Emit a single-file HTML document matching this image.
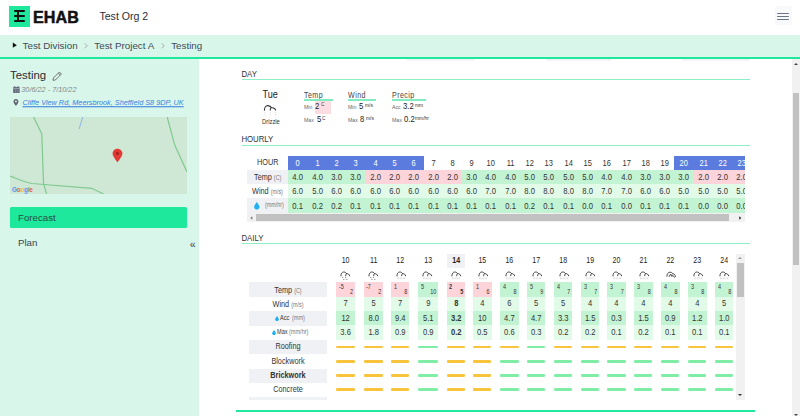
<!DOCTYPE html><html><head><meta charset="utf-8"><style>
*{box-sizing:border-box;margin:0;padding:0}
html,body{width:800px;height:416px;overflow:hidden;background:#fff}
body{position:relative;font-family:"Liberation Sans",sans-serif;color:#333}
.abs{position:absolute}
.t{position:absolute;white-space:nowrap;line-height:1}
</style></head><body>
<div class="abs" style="left:9px;top:6px;width:21px;height:20.5px;background:#1ee89c;"></div>
<div class="abs" style="left:13.9px;top:10.2px;width:11px;height:1.9px;background:#111;border-radius:0.9px"></div>
<div class="abs" style="left:13.9px;top:15.3px;width:11px;height:1.9px;background:#111;border-radius:0.9px"></div>
<div class="abs" style="left:13.9px;top:20.4px;width:11px;height:1.9px;background:#111;border-radius:0.9px"></div>
<div class="abs" style="left:16.9px;top:10.5px;width:2.1px;height:11.5px;background:#111;border-radius:0.9px"></div>
<div class="t" style="left:32.9px;top:8.72px;font-size:16.1px;font-weight:bold;color:#111;letter-spacing:0.15px;-webkit-text-stroke:0.5px #111">EHAB</div>
<div class="t" style="left:99.4px;top:10.63px;font-size:10.6px;color:#2c2f3a">Test Org 2</div>
<div class="abs" style="left:774.5px;top:5.5px;width:17.2px;height:19px;background:#f8f9fb;border-radius:2px"></div>
<div class="abs" style="left:777.3px;top:13.0px;width:11.5px;height:1.4px;background:#6e7381;border-radius:0.7px"></div>
<div class="abs" style="left:777.3px;top:16.0px;width:11.5px;height:1.4px;background:#6e7381;border-radius:0.7px"></div>
<div class="abs" style="left:777.3px;top:19.0px;width:11.5px;height:1.4px;background:#6e7381;border-radius:0.7px"></div>
<div class="abs" style="left:0px;top:35px;width:800px;height:22px;background:#d8f7ea;"></div>
<div class="abs" style="left:0px;top:57px;width:800px;height:2px;background:#1ee89c;"></div>
<svg class="abs" style="left:12px;top:42px" width="6" height="7" viewBox="0 0 6 7"><path d="M0.8 0.6 L4.9 3.2 L0.8 5.8 Z" fill="#111"/></svg>
<div class="t" style="left:22.6px;top:40.70px;font-size:9.8px;color:#434958">Test Division</div>
<div class="t" style="left:94.3px;top:40.70px;font-size:9.8px;color:#434958">Test Project A</div>
<div class="t" style="left:171.2px;top:40.70px;font-size:9.8px;color:#434958">Testing</div>
<svg class="abs" style="left:83.9px;top:43.3px" width="4" height="5.6" viewBox="0 0 4 5.6"><path d="M0.5 0.4 L3.3 2.8 L0.5 5.2" fill="none" stroke="#9aa0aa" stroke-width="0.8"/></svg>
<svg class="abs" style="left:160.9px;top:43.3px" width="4" height="5.6" viewBox="0 0 4 5.6"><path d="M0.5 0.4 L3.3 2.8 L0.5 5.2" fill="none" stroke="#9aa0aa" stroke-width="0.8"/></svg>
<div class="abs" style="left:0px;top:59px;width:199px;height:357px;background:#d8f7ea;"></div>
<div class="t" style="left:10px;top:69.85px;font-size:11.4px;color:#2a2d36">Testing</div>
<svg class="abs" style="left:52px;top:70.5px" width="11" height="10" viewBox="0 0 11 10"><path d="M1 9.3 L1.4 7 L7.4 1 L9.4 3 L3.4 9 Z M6.3 2.1 L8.3 4.1" fill="none" stroke="#666" stroke-width="0.9" stroke-linejoin="round"/></svg>
<svg class="abs" style="left:13px;top:85.6px" width="7" height="7.2" viewBox="0 0 7 7.2"><rect x="0.1" y="1" width="6.6" height="6.2" rx="0.5" fill="#6b7080"/><rect x="1.2" y="0" width="1" height="1.6" fill="#6b7080"/><rect x="4.6" y="0" width="1" height="1.6" fill="#6b7080"/><rect x="0.1" y="2.3" width="6.6" height="0.45" fill="#c8ccd4"/><rect x="2.3" y="2.7" width="0.4" height="4.3" fill="#9da2ad"/><rect x="4.2" y="2.7" width="0.4" height="4.3" fill="#9da2ad"/></svg>
<div class="t" style="left:21.3px;top:86.12px;font-size:7.3px;transform:scale(1.0,1.06);transform-origin:0 3.57px;font-style:italic;color:#858585">30/6/22 - 7/10/22</div>
<svg class="abs" style="left:13.3px;top:99.2px" width="5.9" height="6.9" viewBox="0 0 5 7"><path d="M2.5 0 C1.05 0 0 1.1 0 2.45 C0 4.1 2.5 7 2.5 7 C2.5 7 5 4.1 5 2.45 C5 1.1 3.95 0 2.5 0 Z" fill="#5f6472"/><circle cx="2.5" cy="2.45" r="0.95" fill="#f4f6f8"/></svg>
<div class="t" style="left:22.5px;top:99.32px;font-size:7.3px;transform:scale(1.0,1.06);transform-origin:0 3.57px;font-style:italic;color:#3b7fe0;text-decoration:underline">Cliffe View Rd, Meersbrook, Sheffield S8 9DP, UK</div>
<svg class="abs" style="left:10px;top:117px" width="177" height="77" viewBox="0 0 177 77"><rect width="177" height="77" fill="#cfe8d6"/><polyline points="23.5,0 31.8,16.9 33.5,66.3 36.6,77" fill="none" stroke="#80c98f" stroke-width="1.2"/><path d="M0 59.1 C8 62 14 65 22 66.5 L81.7 71.3 L93.6 77" fill="none" stroke="#80c98f" stroke-width="1.2"/><polyline points="157.2,0 164.8,28.3 177,54.9" fill="none" stroke="#80c98f" stroke-width="1.2"/><polyline points="72.7,0 69.1,12.1" fill="none" stroke="#8fb5ea" stroke-width="1"/><path d="M107.4 31.8 C104.6 31.8 102.6 34 102.6 36.6 C102.6 39.6 107.4 45.4 107.4 45.4 C107.4 45.4 112.4 39.6 112.4 36.6 C112.4 34 110.2 31.8 107.4 31.8 Z" fill="#e53935"/><circle cx="107.4" cy="36.4" r="1.6" fill="#a52420"/></svg>
<div class="t" style="left:12px;top:186.91px;font-size:6.6px;transform:scale(0.96,1.12);transform-origin:0 3.22px;font-weight:bold;letter-spacing:-0.2px;opacity:0.85"><span style="color:#4285f4">G</span><span style="color:#ea4335">o</span><span style="color:#fbbc05">o</span><span style="color:#4285f4">g</span><span style="color:#34a853">l</span><span style="color:#ea4335">e</span></div>
<div class="abs" style="left:10px;top:207px;width:177px;height:20.5px;background:#1ee89c;border-radius:1.5px"></div>
<div class="t" style="left:18px;top:213.09px;font-size:9.7px;color:#2a4a44">Forecast</div>
<div class="t" style="left:18px;top:238.39px;font-size:9.7px;color:#3a4050">Plan</div>
<div class="t" style="left:189.8px;top:239.11px;font-size:10.5px;color:#3a4050">&#171;</div>
<div class="abs" style="left:407px;top:59px;width:67px;height:2px;background:#f3f4f7;"></div>
<div class="abs" style="left:545.6px;top:59px;width:65.39999999999998px;height:2px;background:#f3f4f7;"></div>
<div class="abs" style="left:682px;top:59px;width:68px;height:2px;background:#f3f4f7;"></div>
<div class="abs" style="left:792px;top:59px;width:8px;height:357px;background:#f1f1f1;"></div>
<div class="abs" style="left:793px;top:93px;width:6px;height:172px;background:#c1c1c1;"></div>
<div class="abs" style="left:794.4px;top:62.5px;width:0;height:0;border-left:2px solid transparent;border-right:2px solid transparent;border-bottom:2.6px solid #444"></div>
<div class="abs" style="left:794.4px;top:413.8px;width:0;height:0;border-left:2.1px solid transparent;border-right:2.1px solid transparent;border-top:2.8px solid #444"></div>
<div class="t" style="left:241.4px;top:70.60px;font-size:7.8px;transform:scale(1.0,1.13);transform-origin:0 3.81px;color:#333">DAY</div>
<div class="abs" style="left:242px;top:79px;width:507.5px;height:1px;background:#8cefc6;"></div>
<div class="t" style="left:262.5px;top:91.30px;font-size:9.1px;transform:scale(1.0,1.1);transform-origin:0 4.45px;color:#222">Tue</div>
<svg class="abs" style="left:263px;top:104px" width="14" height="13" viewBox="0 0 14 13"><path d="M1.4 6.3 C1.4 3.5 3 1.6 4.7 1.6 C6 1.6 7.5 2.3 8.2 3.4 C7.4 4 7.2 5.2 7.2 6.1 M8.2 3.4 C10 3.4 12.4 4.6 12.6 6.1" fill="none" stroke="#333" stroke-width="1.05" stroke-linecap="round"/><path d="M1.9 8v4.2 M7.6 8v4.2 M12.4 8v4.2" stroke="#d0d0d0" stroke-width="0.7" stroke-dasharray="1.1 0.9"/></svg>
<div class="t" style="left:262.3px;top:118.94px;font-size:6.1px;transform:scale(0.96,1.12);transform-origin:0 2.98px;color:#333">Drizzle</div>
<div class="t" style="left:304.3px;top:91.74px;font-size:7.4px;transform:scale(0.96,1.12);transform-origin:0 3.61px;color:#444;letter-spacing:0.45px">Temp</div>
<div class="abs" style="left:304.3px;top:99.3px;width:28.4px;height:1.3px;background:#80ecc2;"></div>
<div class="t" style="left:348.1px;top:91.74px;font-size:7.4px;transform:scale(0.96,1.12);transform-origin:0 3.61px;color:#444;letter-spacing:0.45px">Wind</div>
<div class="abs" style="left:348.1px;top:99.3px;width:28.2px;height:1.3px;background:#80ecc2;"></div>
<div class="t" style="left:392px;top:91.74px;font-size:7.4px;transform:scale(0.96,1.12);transform-origin:0 3.61px;color:#444;letter-spacing:0.45px">Precip</div>
<div class="abs" style="left:392px;top:99.3px;width:34.2px;height:1.3px;background:#80ecc2;"></div>
<div class="abs" style="left:315px;top:101px;width:16px;height:12.8px;background:#fdd4d9;opacity:0.8"></div>
<div class="t" style="left:304.2px;top:104.73px;font-size:5.4px;transform:scale(0.96,1.12);transform-origin:0 2.64px;color:#666">Min</div>
<div class="t" style="left:348.0px;top:104.73px;font-size:5.4px;transform:scale(0.96,1.12);transform-origin:0 2.64px;color:#666">Min</div>
<div class="t" style="left:392px;top:104.73px;font-size:5.4px;transform:scale(0.96,1.12);transform-origin:0 2.64px;color:#666">Acc</div>
<div class="t" style="left:304.2px;top:117.83px;font-size:5.4px;transform:scale(0.96,1.12);transform-origin:0 2.64px;color:#666">Max</div>
<div class="t" style="left:348.0px;top:117.83px;font-size:5.4px;transform:scale(0.96,1.12);transform-origin:0 2.64px;color:#666">Max</div>
<div class="t" style="left:392px;top:117.83px;font-size:5.4px;transform:scale(0.96,1.12);transform-origin:0 2.64px;color:#666">Max</div>
<div class="t" style="left:314.7px;top:103.23px;font-size:8px;transform:scale(0.96,1.12);transform-origin:0 3.91px;color:#222">2</div>
<div class="t" style="left:321px;top:103.15px;font-size:4.9px;transform:scale(0.96,1.12);transform-origin:0 2.39px;color:#333">C</div>
<div class="t" style="left:316.5px;top:116.43px;font-size:8px;transform:scale(0.96,1.12);transform-origin:0 3.91px;color:#222">5</div>
<div class="t" style="left:322px;top:116.55px;font-size:4.9px;transform:scale(0.96,1.12);transform-origin:0 2.39px;color:#333">C</div>
<div class="t" style="left:358.7px;top:103.23px;font-size:8px;transform:scale(0.96,1.12);transform-origin:0 3.91px;color:#222">5</div>
<div class="t" style="left:365.3px;top:102.98px;font-size:5.1px;transform:scale(0.96,1.12);transform-origin:0 2.49px;color:#333">m/s</div>
<div class="t" style="left:360.4px;top:116.43px;font-size:8px;transform:scale(0.96,1.12);transform-origin:0 3.91px;color:#222">8</div>
<div class="t" style="left:365.6px;top:116.38px;font-size:5.1px;transform:scale(0.96,1.12);transform-origin:0 2.49px;color:#333">m/s</div>
<div class="t" style="left:403.2px;top:103.23px;font-size:8px;transform:scale(0.96,1.12);transform-origin:0 3.91px;color:#222">3.2</div>
<div class="t" style="left:415px;top:102.98px;font-size:5.1px;transform:scale(0.96,1.12);transform-origin:0 2.49px;color:#333">mm</div>
<div class="t" style="left:404.3px;top:116.43px;font-size:8px;transform:scale(0.96,1.12);transform-origin:0 3.91px;color:#222">0.2</div>
<div class="t" style="left:415.3px;top:116.38px;font-size:5.1px;transform:scale(0.96,1.12);transform-origin:0 2.49px;color:#333">mm/hr</div>
<div class="t" style="left:241.4px;top:135.90px;font-size:7.8px;transform:scale(1.0,1.13);transform-origin:0 3.81px;color:#333">HOURLY</div>
<div class="abs" style="left:242px;top:145px;width:507.5px;height:1px;background:#8cefc6;"></div>
<div class="abs" style="left:247px;top:156px;width:498px;height:66px;overflow:hidden">
<div class="abs" style="left:0px;top:14px;width:41.4px;height:14.3px;background:#f0f1f4;"></div>
<div class="abs" style="left:0px;top:42.3px;width:41.4px;height:14.3px;background:#f0f1f4;"></div>
<div class="t" style="left:10px;top:2.77px;font-size:7.6px;transform:scale(0.96,1.12);transform-origin:0 3.71px;color:#333">HOUR</div>
<div class="t" style="left:6.9px;top:18.17px;font-size:7.6px;transform:scale(0.96,1.12);transform-origin:0 3.71px;color:#333">Temp <span style="font-size:5.6px;color:#777">(C)</span></div>
<div class="t" style="left:4.8px;top:31.97px;font-size:7.6px;transform:scale(0.96,1.12);transform-origin:0 3.71px;color:#333">Wind <span style="font-size:5.6px;color:#777">(m/s)</span></div>
<svg class="abs" style="left:7px;top:46.2px" width="5.6" height="7.5" viewBox="0 0 5 7"><path d="M2.5 0 C2.5 0 0 3.2 0 4.6 C0 5.95 1.1 7 2.5 7 C3.9 7 5 5.95 5 4.6 C5 3.2 2.5 0 2.5 0Z" fill="#1fb0f2"/></svg>
<div class="t" style="left:17.5px;top:47.46px;font-size:5.6px;transform:scale(0.96,1.12);transform-origin:0 2.74px;color:#777">(mm/hr)</div>
<div class="abs" style="left:41.39999999999998px;top:0px;width:19.400000000000002px;height:14px;background:#5b7bde;"></div>
<div class="t" style="left:41.39999999999998px;top:4.00px;font-size:7.8px;width:19.3px;text-align:center;transform:scale(0.96,1.12);transform-origin:50% 3.81px;color:#fff">0</div>
<div class="abs" style="left:41.39999999999998px;top:14px;width:19.400000000000002px;height:14.3px;background:#c2f3d2;"></div>
<div class="abs" style="left:41.39999999999998px;top:28.3px;width:19.400000000000002px;height:14px;background:#e2fbe9;"></div>
<div class="abs" style="left:41.39999999999998px;top:42.3px;width:19.400000000000002px;height:14.3px;background:#c2f3d2;"></div>
<div class="t" style="left:41.39999999999998px;top:17.93px;font-size:8px;width:19.3px;text-align:center;transform:scale(0.96,1.12);transform-origin:50% 3.91px;color:#333">4.0</div>
<div class="t" style="left:41.39999999999998px;top:32.03px;font-size:8px;width:19.3px;text-align:center;transform:scale(0.96,1.12);transform-origin:50% 3.91px;color:#333">6.0</div>
<div class="t" style="left:41.39999999999998px;top:46.63px;font-size:8px;width:19.3px;text-align:center;transform:scale(0.96,1.12);transform-origin:50% 3.91px;color:#333">0.1</div>
<div class="abs" style="left:60.699999999999974px;top:0px;width:19.400000000000002px;height:14px;background:#5b7bde;"></div>
<div class="t" style="left:60.699999999999974px;top:4.00px;font-size:7.8px;width:19.3px;text-align:center;transform:scale(0.96,1.12);transform-origin:50% 3.81px;color:#fff">1</div>
<div class="abs" style="left:60.699999999999974px;top:14px;width:19.400000000000002px;height:14.3px;background:#c2f3d2;"></div>
<div class="abs" style="left:60.699999999999974px;top:28.3px;width:19.400000000000002px;height:14px;background:#e2fbe9;"></div>
<div class="abs" style="left:60.699999999999974px;top:42.3px;width:19.400000000000002px;height:14.3px;background:#c2f3d2;"></div>
<div class="t" style="left:60.699999999999974px;top:17.93px;font-size:8px;width:19.3px;text-align:center;transform:scale(0.96,1.12);transform-origin:50% 3.91px;color:#333">4.0</div>
<div class="t" style="left:60.699999999999974px;top:32.03px;font-size:8px;width:19.3px;text-align:center;transform:scale(0.96,1.12);transform-origin:50% 3.91px;color:#333">5.0</div>
<div class="t" style="left:60.699999999999974px;top:46.63px;font-size:8px;width:19.3px;text-align:center;transform:scale(0.96,1.12);transform-origin:50% 3.91px;color:#333">0.2</div>
<div class="abs" style="left:79.99999999999997px;top:0px;width:19.400000000000002px;height:14px;background:#5b7bde;"></div>
<div class="t" style="left:79.99999999999997px;top:4.00px;font-size:7.8px;width:19.3px;text-align:center;transform:scale(0.96,1.12);transform-origin:50% 3.81px;color:#fff">2</div>
<div class="abs" style="left:79.99999999999997px;top:14px;width:19.400000000000002px;height:14.3px;background:#c2f3d2;"></div>
<div class="abs" style="left:79.99999999999997px;top:28.3px;width:19.400000000000002px;height:14px;background:#e2fbe9;"></div>
<div class="abs" style="left:79.99999999999997px;top:42.3px;width:19.400000000000002px;height:14.3px;background:#c2f3d2;"></div>
<div class="t" style="left:79.99999999999997px;top:17.93px;font-size:8px;width:19.3px;text-align:center;transform:scale(0.96,1.12);transform-origin:50% 3.91px;color:#333">3.0</div>
<div class="t" style="left:79.99999999999997px;top:32.03px;font-size:8px;width:19.3px;text-align:center;transform:scale(0.96,1.12);transform-origin:50% 3.91px;color:#333">6.0</div>
<div class="t" style="left:79.99999999999997px;top:46.63px;font-size:8px;width:19.3px;text-align:center;transform:scale(0.96,1.12);transform-origin:50% 3.91px;color:#333">0.2</div>
<div class="abs" style="left:99.29999999999998px;top:0px;width:19.400000000000002px;height:14px;background:#5b7bde;"></div>
<div class="t" style="left:99.29999999999998px;top:4.00px;font-size:7.8px;width:19.3px;text-align:center;transform:scale(0.96,1.12);transform-origin:50% 3.81px;color:#fff">3</div>
<div class="abs" style="left:99.29999999999998px;top:14px;width:19.400000000000002px;height:14.3px;background:#c2f3d2;"></div>
<div class="abs" style="left:99.29999999999998px;top:28.3px;width:19.400000000000002px;height:14px;background:#e2fbe9;"></div>
<div class="abs" style="left:99.29999999999998px;top:42.3px;width:19.400000000000002px;height:14.3px;background:#c2f3d2;"></div>
<div class="t" style="left:99.29999999999998px;top:17.93px;font-size:8px;width:19.3px;text-align:center;transform:scale(0.96,1.12);transform-origin:50% 3.91px;color:#333">3.0</div>
<div class="t" style="left:99.29999999999998px;top:32.03px;font-size:8px;width:19.3px;text-align:center;transform:scale(0.96,1.12);transform-origin:50% 3.91px;color:#333">6.0</div>
<div class="t" style="left:99.29999999999998px;top:46.63px;font-size:8px;width:19.3px;text-align:center;transform:scale(0.96,1.12);transform-origin:50% 3.91px;color:#333">0.1</div>
<div class="abs" style="left:118.59999999999998px;top:0px;width:19.400000000000002px;height:14px;background:#5b7bde;"></div>
<div class="t" style="left:118.59999999999998px;top:4.00px;font-size:7.8px;width:19.3px;text-align:center;transform:scale(0.96,1.12);transform-origin:50% 3.81px;color:#fff">4</div>
<div class="abs" style="left:118.59999999999998px;top:14px;width:19.400000000000002px;height:14.3px;background:#fdd4d9;"></div>
<div class="abs" style="left:118.59999999999998px;top:28.3px;width:19.400000000000002px;height:14px;background:#e2fbe9;"></div>
<div class="abs" style="left:118.59999999999998px;top:42.3px;width:19.400000000000002px;height:14.3px;background:#c2f3d2;"></div>
<div class="t" style="left:118.59999999999998px;top:17.93px;font-size:8px;width:19.3px;text-align:center;transform:scale(0.96,1.12);transform-origin:50% 3.91px;color:#333">2.0</div>
<div class="t" style="left:118.59999999999998px;top:32.03px;font-size:8px;width:19.3px;text-align:center;transform:scale(0.96,1.12);transform-origin:50% 3.91px;color:#333">6.0</div>
<div class="t" style="left:118.59999999999998px;top:46.63px;font-size:8px;width:19.3px;text-align:center;transform:scale(0.96,1.12);transform-origin:50% 3.91px;color:#333">0.1</div>
<div class="abs" style="left:137.89999999999998px;top:0px;width:19.400000000000002px;height:14px;background:#5b7bde;"></div>
<div class="t" style="left:137.89999999999998px;top:4.00px;font-size:7.8px;width:19.3px;text-align:center;transform:scale(0.96,1.12);transform-origin:50% 3.81px;color:#fff">5</div>
<div class="abs" style="left:137.89999999999998px;top:14px;width:19.400000000000002px;height:14.3px;background:#fdd4d9;"></div>
<div class="abs" style="left:137.89999999999998px;top:28.3px;width:19.400000000000002px;height:14px;background:#e2fbe9;"></div>
<div class="abs" style="left:137.89999999999998px;top:42.3px;width:19.400000000000002px;height:14.3px;background:#c2f3d2;"></div>
<div class="t" style="left:137.89999999999998px;top:17.93px;font-size:8px;width:19.3px;text-align:center;transform:scale(0.96,1.12);transform-origin:50% 3.91px;color:#333">2.0</div>
<div class="t" style="left:137.89999999999998px;top:32.03px;font-size:8px;width:19.3px;text-align:center;transform:scale(0.96,1.12);transform-origin:50% 3.91px;color:#333">6.0</div>
<div class="t" style="left:137.89999999999998px;top:46.63px;font-size:8px;width:19.3px;text-align:center;transform:scale(0.96,1.12);transform-origin:50% 3.91px;color:#333">0.1</div>
<div class="abs" style="left:157.2px;top:0px;width:19.400000000000002px;height:14px;background:#5b7bde;"></div>
<div class="t" style="left:157.2px;top:4.00px;font-size:7.8px;width:19.3px;text-align:center;transform:scale(0.96,1.12);transform-origin:50% 3.81px;color:#fff">6</div>
<div class="abs" style="left:157.2px;top:14px;width:19.400000000000002px;height:14.3px;background:#fdd4d9;"></div>
<div class="abs" style="left:157.2px;top:28.3px;width:19.400000000000002px;height:14px;background:#e2fbe9;"></div>
<div class="abs" style="left:157.2px;top:42.3px;width:19.400000000000002px;height:14.3px;background:#c2f3d2;"></div>
<div class="t" style="left:157.2px;top:17.93px;font-size:8px;width:19.3px;text-align:center;transform:scale(0.96,1.12);transform-origin:50% 3.91px;color:#333">2.0</div>
<div class="t" style="left:157.2px;top:32.03px;font-size:8px;width:19.3px;text-align:center;transform:scale(0.96,1.12);transform-origin:50% 3.91px;color:#333">6.0</div>
<div class="t" style="left:157.2px;top:46.63px;font-size:8px;width:19.3px;text-align:center;transform:scale(0.96,1.12);transform-origin:50% 3.91px;color:#333">0.1</div>
<div class="t" style="left:176.49999999999997px;top:4.00px;font-size:7.8px;width:19.3px;text-align:center;transform:scale(0.96,1.12);transform-origin:50% 3.81px;color:#333">7</div>
<div class="abs" style="left:176.49999999999997px;top:14px;width:19.400000000000002px;height:14.3px;background:#fdd4d9;"></div>
<div class="abs" style="left:176.49999999999997px;top:28.3px;width:19.400000000000002px;height:14px;background:#e2fbe9;"></div>
<div class="abs" style="left:176.49999999999997px;top:42.3px;width:19.400000000000002px;height:14.3px;background:#c2f3d2;"></div>
<div class="t" style="left:176.49999999999997px;top:17.93px;font-size:8px;width:19.3px;text-align:center;transform:scale(0.96,1.12);transform-origin:50% 3.91px;color:#333">2.0</div>
<div class="t" style="left:176.49999999999997px;top:32.03px;font-size:8px;width:19.3px;text-align:center;transform:scale(0.96,1.12);transform-origin:50% 3.91px;color:#333">6.0</div>
<div class="t" style="left:176.49999999999997px;top:46.63px;font-size:8px;width:19.3px;text-align:center;transform:scale(0.96,1.12);transform-origin:50% 3.91px;color:#333">0.1</div>
<div class="t" style="left:195.79999999999998px;top:4.00px;font-size:7.8px;width:19.3px;text-align:center;transform:scale(0.96,1.12);transform-origin:50% 3.81px;color:#333">8</div>
<div class="abs" style="left:195.79999999999998px;top:14px;width:19.400000000000002px;height:14.3px;background:#fdd4d9;"></div>
<div class="abs" style="left:195.79999999999998px;top:28.3px;width:19.400000000000002px;height:14px;background:#e2fbe9;"></div>
<div class="abs" style="left:195.79999999999998px;top:42.3px;width:19.400000000000002px;height:14.3px;background:#c2f3d2;"></div>
<div class="t" style="left:195.79999999999998px;top:17.93px;font-size:8px;width:19.3px;text-align:center;transform:scale(0.96,1.12);transform-origin:50% 3.91px;color:#333">2.0</div>
<div class="t" style="left:195.79999999999998px;top:32.03px;font-size:8px;width:19.3px;text-align:center;transform:scale(0.96,1.12);transform-origin:50% 3.91px;color:#333">6.0</div>
<div class="t" style="left:195.79999999999998px;top:46.63px;font-size:8px;width:19.3px;text-align:center;transform:scale(0.96,1.12);transform-origin:50% 3.91px;color:#333">0.1</div>
<div class="t" style="left:215.1px;top:4.00px;font-size:7.8px;width:19.3px;text-align:center;transform:scale(0.96,1.12);transform-origin:50% 3.81px;color:#333">9</div>
<div class="abs" style="left:215.1px;top:14px;width:19.400000000000002px;height:14.3px;background:#c2f3d2;"></div>
<div class="abs" style="left:215.1px;top:28.3px;width:19.400000000000002px;height:14px;background:#e2fbe9;"></div>
<div class="abs" style="left:215.1px;top:42.3px;width:19.400000000000002px;height:14.3px;background:#c2f3d2;"></div>
<div class="t" style="left:215.1px;top:17.93px;font-size:8px;width:19.3px;text-align:center;transform:scale(0.96,1.12);transform-origin:50% 3.91px;color:#333">3.0</div>
<div class="t" style="left:215.1px;top:32.03px;font-size:8px;width:19.3px;text-align:center;transform:scale(0.96,1.12);transform-origin:50% 3.91px;color:#333">6.0</div>
<div class="t" style="left:215.1px;top:46.63px;font-size:8px;width:19.3px;text-align:center;transform:scale(0.96,1.12);transform-origin:50% 3.91px;color:#333">0.1</div>
<div class="t" style="left:234.39999999999998px;top:4.00px;font-size:7.8px;width:19.3px;text-align:center;transform:scale(0.96,1.12);transform-origin:50% 3.81px;color:#333">10</div>
<div class="abs" style="left:234.39999999999998px;top:14px;width:19.400000000000002px;height:14.3px;background:#c2f3d2;"></div>
<div class="abs" style="left:234.39999999999998px;top:28.3px;width:19.400000000000002px;height:14px;background:#e2fbe9;"></div>
<div class="abs" style="left:234.39999999999998px;top:42.3px;width:19.400000000000002px;height:14.3px;background:#c2f3d2;"></div>
<div class="t" style="left:234.39999999999998px;top:17.93px;font-size:8px;width:19.3px;text-align:center;transform:scale(0.96,1.12);transform-origin:50% 3.91px;color:#333">4.0</div>
<div class="t" style="left:234.39999999999998px;top:32.03px;font-size:8px;width:19.3px;text-align:center;transform:scale(0.96,1.12);transform-origin:50% 3.91px;color:#333">7.0</div>
<div class="t" style="left:234.39999999999998px;top:46.63px;font-size:8px;width:19.3px;text-align:center;transform:scale(0.96,1.12);transform-origin:50% 3.91px;color:#333">0.1</div>
<div class="t" style="left:253.7px;top:4.00px;font-size:7.8px;width:19.3px;text-align:center;transform:scale(0.96,1.12);transform-origin:50% 3.81px;color:#333">11</div>
<div class="abs" style="left:253.7px;top:14px;width:19.400000000000002px;height:14.3px;background:#c2f3d2;"></div>
<div class="abs" style="left:253.7px;top:28.3px;width:19.400000000000002px;height:14px;background:#e2fbe9;"></div>
<div class="abs" style="left:253.7px;top:42.3px;width:19.400000000000002px;height:14.3px;background:#c2f3d2;"></div>
<div class="t" style="left:253.7px;top:17.93px;font-size:8px;width:19.3px;text-align:center;transform:scale(0.96,1.12);transform-origin:50% 3.91px;color:#333">4.0</div>
<div class="t" style="left:253.7px;top:32.03px;font-size:8px;width:19.3px;text-align:center;transform:scale(0.96,1.12);transform-origin:50% 3.91px;color:#333">7.0</div>
<div class="t" style="left:253.7px;top:46.63px;font-size:8px;width:19.3px;text-align:center;transform:scale(0.96,1.12);transform-origin:50% 3.91px;color:#333">0.1</div>
<div class="t" style="left:273.0px;top:4.00px;font-size:7.8px;width:19.3px;text-align:center;transform:scale(0.96,1.12);transform-origin:50% 3.81px;color:#333">12</div>
<div class="abs" style="left:273.0px;top:14px;width:19.400000000000002px;height:14.3px;background:#c2f3d2;"></div>
<div class="abs" style="left:273.0px;top:28.3px;width:19.400000000000002px;height:14px;background:#e2fbe9;"></div>
<div class="abs" style="left:273.0px;top:42.3px;width:19.400000000000002px;height:14.3px;background:#c2f3d2;"></div>
<div class="t" style="left:273.0px;top:17.93px;font-size:8px;width:19.3px;text-align:center;transform:scale(0.96,1.12);transform-origin:50% 3.91px;color:#333">5.0</div>
<div class="t" style="left:273.0px;top:32.03px;font-size:8px;width:19.3px;text-align:center;transform:scale(0.96,1.12);transform-origin:50% 3.91px;color:#333">8.0</div>
<div class="t" style="left:273.0px;top:46.63px;font-size:8px;width:19.3px;text-align:center;transform:scale(0.96,1.12);transform-origin:50% 3.91px;color:#333">0.2</div>
<div class="t" style="left:292.29999999999995px;top:4.00px;font-size:7.8px;width:19.3px;text-align:center;transform:scale(0.96,1.12);transform-origin:50% 3.81px;color:#333">13</div>
<div class="abs" style="left:292.29999999999995px;top:14px;width:19.400000000000002px;height:14.3px;background:#c2f3d2;"></div>
<div class="abs" style="left:292.29999999999995px;top:28.3px;width:19.400000000000002px;height:14px;background:#e2fbe9;"></div>
<div class="abs" style="left:292.29999999999995px;top:42.3px;width:19.400000000000002px;height:14.3px;background:#c2f3d2;"></div>
<div class="t" style="left:292.29999999999995px;top:17.93px;font-size:8px;width:19.3px;text-align:center;transform:scale(0.96,1.12);transform-origin:50% 3.91px;color:#333">5.0</div>
<div class="t" style="left:292.29999999999995px;top:32.03px;font-size:8px;width:19.3px;text-align:center;transform:scale(0.96,1.12);transform-origin:50% 3.91px;color:#333">8.0</div>
<div class="t" style="left:292.29999999999995px;top:46.63px;font-size:8px;width:19.3px;text-align:center;transform:scale(0.96,1.12);transform-origin:50% 3.91px;color:#333">0.1</div>
<div class="t" style="left:311.59999999999997px;top:4.00px;font-size:7.8px;width:19.3px;text-align:center;transform:scale(0.96,1.12);transform-origin:50% 3.81px;color:#333">14</div>
<div class="abs" style="left:311.59999999999997px;top:14px;width:19.400000000000002px;height:14.3px;background:#c2f3d2;"></div>
<div class="abs" style="left:311.59999999999997px;top:28.3px;width:19.400000000000002px;height:14px;background:#e2fbe9;"></div>
<div class="abs" style="left:311.59999999999997px;top:42.3px;width:19.400000000000002px;height:14.3px;background:#c2f3d2;"></div>
<div class="t" style="left:311.59999999999997px;top:17.93px;font-size:8px;width:19.3px;text-align:center;transform:scale(0.96,1.12);transform-origin:50% 3.91px;color:#333">5.0</div>
<div class="t" style="left:311.59999999999997px;top:32.03px;font-size:8px;width:19.3px;text-align:center;transform:scale(0.96,1.12);transform-origin:50% 3.91px;color:#333">8.0</div>
<div class="t" style="left:311.59999999999997px;top:46.63px;font-size:8px;width:19.3px;text-align:center;transform:scale(0.96,1.12);transform-origin:50% 3.91px;color:#333">0.1</div>
<div class="t" style="left:330.9px;top:4.00px;font-size:7.8px;width:19.3px;text-align:center;transform:scale(0.96,1.12);transform-origin:50% 3.81px;color:#333">15</div>
<div class="abs" style="left:330.9px;top:14px;width:19.400000000000002px;height:14.3px;background:#c2f3d2;"></div>
<div class="abs" style="left:330.9px;top:28.3px;width:19.400000000000002px;height:14px;background:#e2fbe9;"></div>
<div class="abs" style="left:330.9px;top:42.3px;width:19.400000000000002px;height:14.3px;background:#c2f3d2;"></div>
<div class="t" style="left:330.9px;top:17.93px;font-size:8px;width:19.3px;text-align:center;transform:scale(0.96,1.12);transform-origin:50% 3.91px;color:#333">5.0</div>
<div class="t" style="left:330.9px;top:32.03px;font-size:8px;width:19.3px;text-align:center;transform:scale(0.96,1.12);transform-origin:50% 3.91px;color:#333">8.0</div>
<div class="t" style="left:330.9px;top:46.63px;font-size:8px;width:19.3px;text-align:center;transform:scale(0.96,1.12);transform-origin:50% 3.91px;color:#333">0.0</div>
<div class="t" style="left:350.2px;top:4.00px;font-size:7.8px;width:19.3px;text-align:center;transform:scale(0.96,1.12);transform-origin:50% 3.81px;color:#333">16</div>
<div class="abs" style="left:350.2px;top:14px;width:19.400000000000002px;height:14.3px;background:#c2f3d2;"></div>
<div class="abs" style="left:350.2px;top:28.3px;width:19.400000000000002px;height:14px;background:#e2fbe9;"></div>
<div class="abs" style="left:350.2px;top:42.3px;width:19.400000000000002px;height:14.3px;background:#c2f3d2;"></div>
<div class="t" style="left:350.2px;top:17.93px;font-size:8px;width:19.3px;text-align:center;transform:scale(0.96,1.12);transform-origin:50% 3.91px;color:#333">4.0</div>
<div class="t" style="left:350.2px;top:32.03px;font-size:8px;width:19.3px;text-align:center;transform:scale(0.96,1.12);transform-origin:50% 3.91px;color:#333">7.0</div>
<div class="t" style="left:350.2px;top:46.63px;font-size:8px;width:19.3px;text-align:center;transform:scale(0.96,1.12);transform-origin:50% 3.91px;color:#333">0.1</div>
<div class="t" style="left:369.5px;top:4.00px;font-size:7.8px;width:19.3px;text-align:center;transform:scale(0.96,1.12);transform-origin:50% 3.81px;color:#333">17</div>
<div class="abs" style="left:369.5px;top:14px;width:19.400000000000002px;height:14.3px;background:#c2f3d2;"></div>
<div class="abs" style="left:369.5px;top:28.3px;width:19.400000000000002px;height:14px;background:#e2fbe9;"></div>
<div class="abs" style="left:369.5px;top:42.3px;width:19.400000000000002px;height:14.3px;background:#c2f3d2;"></div>
<div class="t" style="left:369.5px;top:17.93px;font-size:8px;width:19.3px;text-align:center;transform:scale(0.96,1.12);transform-origin:50% 3.91px;color:#333">4.0</div>
<div class="t" style="left:369.5px;top:32.03px;font-size:8px;width:19.3px;text-align:center;transform:scale(0.96,1.12);transform-origin:50% 3.91px;color:#333">7.0</div>
<div class="t" style="left:369.5px;top:46.63px;font-size:8px;width:19.3px;text-align:center;transform:scale(0.96,1.12);transform-origin:50% 3.91px;color:#333">0.0</div>
<div class="t" style="left:388.8px;top:4.00px;font-size:7.8px;width:19.3px;text-align:center;transform:scale(0.96,1.12);transform-origin:50% 3.81px;color:#333">18</div>
<div class="abs" style="left:388.8px;top:14px;width:19.400000000000002px;height:14.3px;background:#c2f3d2;"></div>
<div class="abs" style="left:388.8px;top:28.3px;width:19.400000000000002px;height:14px;background:#e2fbe9;"></div>
<div class="abs" style="left:388.8px;top:42.3px;width:19.400000000000002px;height:14.3px;background:#c2f3d2;"></div>
<div class="t" style="left:388.8px;top:17.93px;font-size:8px;width:19.3px;text-align:center;transform:scale(0.96,1.12);transform-origin:50% 3.91px;color:#333">3.0</div>
<div class="t" style="left:388.8px;top:32.03px;font-size:8px;width:19.3px;text-align:center;transform:scale(0.96,1.12);transform-origin:50% 3.91px;color:#333">6.0</div>
<div class="t" style="left:388.8px;top:46.63px;font-size:8px;width:19.3px;text-align:center;transform:scale(0.96,1.12);transform-origin:50% 3.91px;color:#333">0.1</div>
<div class="t" style="left:408.09999999999997px;top:4.00px;font-size:7.8px;width:19.3px;text-align:center;transform:scale(0.96,1.12);transform-origin:50% 3.81px;color:#333">19</div>
<div class="abs" style="left:408.09999999999997px;top:14px;width:19.400000000000002px;height:14.3px;background:#c2f3d2;"></div>
<div class="abs" style="left:408.09999999999997px;top:28.3px;width:19.400000000000002px;height:14px;background:#e2fbe9;"></div>
<div class="abs" style="left:408.09999999999997px;top:42.3px;width:19.400000000000002px;height:14.3px;background:#c2f3d2;"></div>
<div class="t" style="left:408.09999999999997px;top:17.93px;font-size:8px;width:19.3px;text-align:center;transform:scale(0.96,1.12);transform-origin:50% 3.91px;color:#333">3.0</div>
<div class="t" style="left:408.09999999999997px;top:32.03px;font-size:8px;width:19.3px;text-align:center;transform:scale(0.96,1.12);transform-origin:50% 3.91px;color:#333">6.0</div>
<div class="t" style="left:408.09999999999997px;top:46.63px;font-size:8px;width:19.3px;text-align:center;transform:scale(0.96,1.12);transform-origin:50% 3.91px;color:#333">0.1</div>
<div class="abs" style="left:427.4px;top:0px;width:19.400000000000002px;height:14px;background:#5b7bde;"></div>
<div class="t" style="left:427.4px;top:4.00px;font-size:7.8px;width:19.3px;text-align:center;transform:scale(0.96,1.12);transform-origin:50% 3.81px;color:#fff">20</div>
<div class="abs" style="left:427.4px;top:14px;width:19.400000000000002px;height:14.3px;background:#c2f3d2;"></div>
<div class="abs" style="left:427.4px;top:28.3px;width:19.400000000000002px;height:14px;background:#e2fbe9;"></div>
<div class="abs" style="left:427.4px;top:42.3px;width:19.400000000000002px;height:14.3px;background:#c2f3d2;"></div>
<div class="t" style="left:427.4px;top:17.93px;font-size:8px;width:19.3px;text-align:center;transform:scale(0.96,1.12);transform-origin:50% 3.91px;color:#333">3.0</div>
<div class="t" style="left:427.4px;top:32.03px;font-size:8px;width:19.3px;text-align:center;transform:scale(0.96,1.12);transform-origin:50% 3.91px;color:#333">5.0</div>
<div class="t" style="left:427.4px;top:46.63px;font-size:8px;width:19.3px;text-align:center;transform:scale(0.96,1.12);transform-origin:50% 3.91px;color:#333">0.1</div>
<div class="abs" style="left:446.7px;top:0px;width:19.400000000000002px;height:14px;background:#5b7bde;"></div>
<div class="t" style="left:446.7px;top:4.00px;font-size:7.8px;width:19.3px;text-align:center;transform:scale(0.96,1.12);transform-origin:50% 3.81px;color:#fff">21</div>
<div class="abs" style="left:446.7px;top:14px;width:19.400000000000002px;height:14.3px;background:#fdd4d9;"></div>
<div class="abs" style="left:446.7px;top:28.3px;width:19.400000000000002px;height:14px;background:#e2fbe9;"></div>
<div class="abs" style="left:446.7px;top:42.3px;width:19.400000000000002px;height:14.3px;background:#c2f3d2;"></div>
<div class="t" style="left:446.7px;top:17.93px;font-size:8px;width:19.3px;text-align:center;transform:scale(0.96,1.12);transform-origin:50% 3.91px;color:#333">2.0</div>
<div class="t" style="left:446.7px;top:32.03px;font-size:8px;width:19.3px;text-align:center;transform:scale(0.96,1.12);transform-origin:50% 3.91px;color:#333">5.0</div>
<div class="t" style="left:446.7px;top:46.63px;font-size:8px;width:19.3px;text-align:center;transform:scale(0.96,1.12);transform-origin:50% 3.91px;color:#333">0.0</div>
<div class="abs" style="left:466.0px;top:0px;width:19.400000000000002px;height:14px;background:#5b7bde;"></div>
<div class="t" style="left:466.0px;top:4.00px;font-size:7.8px;width:19.3px;text-align:center;transform:scale(0.96,1.12);transform-origin:50% 3.81px;color:#fff">22</div>
<div class="abs" style="left:466.0px;top:14px;width:19.400000000000002px;height:14.3px;background:#fdd4d9;"></div>
<div class="abs" style="left:466.0px;top:28.3px;width:19.400000000000002px;height:14px;background:#e2fbe9;"></div>
<div class="abs" style="left:466.0px;top:42.3px;width:19.400000000000002px;height:14.3px;background:#c2f3d2;"></div>
<div class="t" style="left:466.0px;top:17.93px;font-size:8px;width:19.3px;text-align:center;transform:scale(0.96,1.12);transform-origin:50% 3.91px;color:#333">2.0</div>
<div class="t" style="left:466.0px;top:32.03px;font-size:8px;width:19.3px;text-align:center;transform:scale(0.96,1.12);transform-origin:50% 3.91px;color:#333">5.0</div>
<div class="t" style="left:466.0px;top:46.63px;font-size:8px;width:19.3px;text-align:center;transform:scale(0.96,1.12);transform-origin:50% 3.91px;color:#333">0.0</div>
<div class="abs" style="left:485.3px;top:0px;width:19.400000000000002px;height:14px;background:#5b7bde;"></div>
<div class="t" style="left:485.3px;top:4.00px;font-size:7.8px;width:19.3px;text-align:center;transform:scale(0.96,1.12);transform-origin:50% 3.81px;color:#fff">23</div>
<div class="abs" style="left:485.3px;top:14px;width:19.400000000000002px;height:14.3px;background:#fdd4d9;"></div>
<div class="abs" style="left:485.3px;top:28.3px;width:19.400000000000002px;height:14px;background:#e2fbe9;"></div>
<div class="abs" style="left:485.3px;top:42.3px;width:19.400000000000002px;height:14.3px;background:#c2f3d2;"></div>
<div class="t" style="left:485.3px;top:17.93px;font-size:8px;width:19.3px;text-align:center;transform:scale(0.96,1.12);transform-origin:50% 3.91px;color:#333">2.0</div>
<div class="t" style="left:485.3px;top:32.03px;font-size:8px;width:19.3px;text-align:center;transform:scale(0.96,1.12);transform-origin:50% 3.91px;color:#333">5.0</div>
<div class="t" style="left:485.3px;top:46.63px;font-size:8px;width:19.3px;text-align:center;transform:scale(0.96,1.12);transform-origin:50% 3.91px;color:#333">0.0</div>
<div class="abs" style="left:0px;top:56.6px;width:498px;height:9.2px;background:#f1f1f1;"></div>
<div class="abs" style="left:8.5px;top:58.1px;width:473.3px;height:6.9px;background:#c1c1c1;"></div>
<svg class="abs" style="left:2.5px;top:59.8px" width="3" height="4" viewBox="0 0 3 4"><path d="M2.4 0.2 L0.2 2 L2.4 3.8Z" fill="#777"/></svg>
<svg class="abs" style="left:491.8px;top:60px" width="3" height="4" viewBox="0 0 3 4"><path d="M0.2 0.2 L2.4 2 L0.2 3.8Z" fill="#333"/></svg>
</div>
<div class="t" style="left:241.4px;top:234.90px;font-size:7.8px;transform:scale(1.0,1.13);transform-origin:0 3.81px;color:#333">DAILY</div>
<div class="abs" style="left:242px;top:243px;width:507.5px;height:1px;background:#8cefc6;"></div>
<div class="abs" style="left:236px;top:253px;width:509px;height:147px;overflow:hidden">
<div class="abs" style="left:500px;top:1px;width:8.5px;height:146px;background:#f1f1f1;"></div>
<div class="abs" style="left:501px;top:9.6px;width:6.5px;height:34.3px;background:#c1c1c1;"></div>
<div class="abs" style="left:502.2px;top:4px;width:0;height:0;border-left:2.2px solid transparent;border-right:2.2px solid transparent;border-bottom:2.5px solid #999"></div>
<div class="abs" style="left:502.2px;top:141px;width:0;height:0;border-left:2.2px solid transparent;border-right:2.2px solid transparent;border-top:2.5px solid #333"></div>
<div class="abs" style="left:13.400000000000006px;top:29px;width:78px;height:14.5px;background:#f0f1f4;"></div>
<div class="abs" style="left:13.400000000000006px;top:57.5px;width:78px;height:15px;background:#f0f1f4;"></div>
<div class="abs" style="left:13.400000000000006px;top:86.8px;width:78px;height:14px;background:#f0f1f4;"></div>
<div class="abs" style="left:13.400000000000006px;top:115.6px;width:78px;height:14px;background:#f0f1f4;"></div>
<div class="abs" style="left:13.400000000000006px;top:143.9px;width:78px;height:3.2px;background:#f0f1f4;"></div>
<div class="t" style="left:13.400000000000006px;top:33.67px;font-size:7.6px;width:78px;text-align:center;transform:scale(0.96,1.12);transform-origin:50% 3.71px;color:#333">Temp <span style="font-size:5.6px;color:#777">(C)</span></div>
<div class="t" style="left:13.400000000000006px;top:47.67px;font-size:7.6px;width:78px;text-align:center;transform:scale(0.96,1.12);transform-origin:50% 3.71px;color:#333">Wind <span style="font-size:5.6px;color:#777">(m/s)</span></div>
<svg class="abs" style="left:38.80000000000001px;top:62.8px" width="4" height="5.2" viewBox="0 0 5 7"><path d="M2.5 0 C2.5 0 0 3.2 0 4.5 C0 5.9 1.1 7 2.5 7 C3.9 7 5 5.9 5 4.5 C5 3.2 2.5 0 2.5 0Z" fill="#1fb0f2"/></svg>
<div class="t" style="left:44.0px;top:62.69px;font-size:5.8px;transform:scale(0.96,1.12);transform-origin:0 2.83px;color:#333">Acc</div>
<div class="t" style="left:55.5px;top:62.69px;font-size:5.8px;transform:scale(0.96,1.12);transform-origin:0 2.83px;color:#777">(mm)</div>
<svg class="abs" style="left:35.5px;top:77.2px" width="4" height="5.2" viewBox="0 0 5 7"><path d="M2.5 0 C2.5 0 0 3.2 0 4.5 C0 5.9 1.1 7 2.5 7 C3.9 7 5 5.9 5 4.5 C5 3.2 2.5 0 2.5 0Z" fill="#1fb0f2"/></svg>
<div class="t" style="left:40.69999999999999px;top:77.09px;font-size:5.8px;transform:scale(0.96,1.12);transform-origin:0 2.83px;color:#333">Max</div>
<div class="t" style="left:52.60000000000002px;top:77.09px;font-size:5.8px;transform:scale(0.96,1.12);transform-origin:0 2.83px;color:#777">(mm/hr)</div>
<div class="t" style="left:13.400000000000006px;top:90.37px;font-size:7.6px;width:78px;text-align:center;transform:scale(0.96,1.12);transform-origin:50% 3.71px;color:#333">Roofing</div>
<div class="t" style="left:13.400000000000006px;top:105.27px;font-size:7.6px;width:78px;text-align:center;transform:scale(0.96,1.12);transform-origin:50% 3.71px;color:#333">Blockwork</div>
<div class="t" style="left:13.400000000000006px;top:118.97px;font-size:7.6px;width:78px;text-align:center;transform:scale(0.96,1.12);transform-origin:50% 3.71px;color:#333"><b>Brickwork</b></div>
<div class="t" style="left:13.400000000000006px;top:132.87px;font-size:7.6px;width:78px;text-align:center;transform:scale(0.96,1.12);transform-origin:50% 3.71px;color:#333">Concrete</div>
<div class="t" style="left:99.85000000000002px;top:4.12px;font-size:7.3px;width:19.25px;text-align:center;transform:scale(0.96,1.12);transform-origin:50% 3.57px;color:#222;">10</div>
<svg class="abs" style="left:104.45000000000002px;top:17.6px" width="10.5" height="9" viewBox="0 0 10.5 9"><path d="M0.9 4.9 C0.9 2.6 2.2 1 3.7 1 C4.8 1 6 1.6 6.5 2.5 C5.9 3 5.7 3.9 5.7 4.7 M6.5 2.5 C7.9 2.5 9.6 3.4 9.7 4.8" fill="none" stroke="#3a3a3a" stroke-width="0.95" stroke-linecap="round"/><path d="M2.3 6.4h0.9 M5.2 6.4h0.9 M3.4 8.4h0.9 M6.4 8.4h0.9" stroke="#555" stroke-width="0.9"/></svg>
<div class="abs" style="left:99.85000000000002px;top:29px;width:19.25px;height:14.8px;background:#fdd4d9;"></div>
<div class="t" style="left:102.75000000000003px;top:31.57px;font-size:5.7px;transform:scale(0.96,1.12);transform-origin:0 2.78px;color:#333;">-5</div>
<div class="t" style="left:99.85000000000002px;top:36.97px;font-size:5.7px;width:17.15px;text-align:right;transform:scale(0.96,1.12);transform-origin:100% 2.78px;color:#333;">2</div>
<div class="abs" style="left:99.85000000000002px;top:43.8px;width:19.25px;height:13.8px;background:#e2fbe9;"></div>
<div class="abs" style="left:99.85000000000002px;top:57.6px;width:19.25px;height:14.8px;background:#c2f3d2;"></div>
<div class="abs" style="left:99.85000000000002px;top:72.4px;width:19.25px;height:14.2px;background:#e2fbe9;"></div>
<div class="t" style="left:99.85000000000002px;top:47.01px;font-size:7.9px;width:19.25px;text-align:center;transform:scale(0.96,1.12);transform-origin:50% 3.86px;color:#333;">7</div>
<div class="t" style="left:99.85000000000002px;top:61.61px;font-size:7.9px;width:19.25px;text-align:center;transform:scale(0.96,1.12);transform-origin:50% 3.86px;color:#333;">12</div>
<div class="t" style="left:99.85000000000002px;top:75.71px;font-size:7.9px;width:19.25px;text-align:center;transform:scale(0.96,1.12);transform-origin:50% 3.86px;color:#333;">3.6</div>
<div class="abs" style="left:100.05000000000003px;top:92.55px;width:18.85px;height:2.6px;background:#f8c43c;border-radius:1.3px"></div>
<div class="abs" style="left:100.05000000000003px;top:106.95px;width:18.85px;height:2.6px;background:#f8c43c;border-radius:1.3px"></div>
<div class="abs" style="left:100.05000000000003px;top:121.4px;width:18.85px;height:2.6px;background:#f8c43c;border-radius:1.3px"></div>
<div class="abs" style="left:100.05000000000003px;top:135.4px;width:18.85px;height:2.6px;background:#f8c43c;border-radius:1.3px"></div>
<div class="t" style="left:127.5px;top:4.12px;font-size:7.3px;width:19.399999999999977px;text-align:center;transform:scale(0.96,1.12);transform-origin:50% 3.57px;color:#222;">11</div>
<svg class="abs" style="left:132.1px;top:17.6px" width="10.5" height="9" viewBox="0 0 10.5 9"><path d="M0.9 4.9 C0.9 2.6 2.2 1 3.7 1 C4.8 1 6 1.6 6.5 2.5 C5.9 3 5.7 3.9 5.7 4.7 M6.5 2.5 C7.9 2.5 9.6 3.4 9.7 4.8" fill="none" stroke="#3a3a3a" stroke-width="0.95" stroke-linecap="round"/><path d="M2.3 6.4h0.9 M5.2 6.4h0.9 M3.4 8.4h0.9 M6.4 8.4h0.9" stroke="#555" stroke-width="0.9"/></svg>
<div class="abs" style="left:127.5px;top:29px;width:19.399999999999977px;height:14.8px;background:#fdd4d9;"></div>
<div class="t" style="left:130.4px;top:31.57px;font-size:5.7px;transform:scale(0.96,1.12);transform-origin:0 2.78px;color:#333;">-7</div>
<div class="t" style="left:127.5px;top:36.97px;font-size:5.7px;width:17.299999999999976px;text-align:right;transform:scale(0.96,1.12);transform-origin:100% 2.78px;color:#333;">2</div>
<div class="abs" style="left:127.5px;top:43.8px;width:19.399999999999977px;height:13.8px;background:#e2fbe9;"></div>
<div class="abs" style="left:127.5px;top:57.6px;width:19.399999999999977px;height:14.8px;background:#c2f3d2;"></div>
<div class="abs" style="left:127.5px;top:72.4px;width:19.399999999999977px;height:14.2px;background:#e2fbe9;"></div>
<div class="t" style="left:127.5px;top:47.01px;font-size:7.9px;width:19.399999999999977px;text-align:center;transform:scale(0.96,1.12);transform-origin:50% 3.86px;color:#333;">5</div>
<div class="t" style="left:127.5px;top:61.61px;font-size:7.9px;width:19.399999999999977px;text-align:center;transform:scale(0.96,1.12);transform-origin:50% 3.86px;color:#333;">8.0</div>
<div class="t" style="left:127.5px;top:75.71px;font-size:7.9px;width:19.399999999999977px;text-align:center;transform:scale(0.96,1.12);transform-origin:50% 3.86px;color:#333;">1.8</div>
<div class="abs" style="left:127.7px;top:92.55px;width:18.99999999999998px;height:2.6px;background:#f8c43c;border-radius:1.3px"></div>
<div class="abs" style="left:127.7px;top:106.95px;width:18.99999999999998px;height:2.6px;background:#f8c43c;border-radius:1.3px"></div>
<div class="abs" style="left:127.7px;top:121.4px;width:18.99999999999998px;height:2.6px;background:#f8c43c;border-radius:1.3px"></div>
<div class="abs" style="left:127.7px;top:135.4px;width:18.99999999999998px;height:2.6px;background:#f8c43c;border-radius:1.3px"></div>
<div class="t" style="left:155.10000000000002px;top:4.12px;font-size:7.3px;width:18.399999999999977px;text-align:center;transform:scale(0.96,1.12);transform-origin:50% 3.57px;color:#222;">12</div>
<svg class="abs" style="left:159.70000000000002px;top:17.6px" width="10.5" height="9" viewBox="0 0 10.5 9"><path d="M0.9 4.9 C0.9 2.6 2.2 1 3.7 1 C4.8 1 6 1.6 6.5 2.5 C5.9 3 5.7 3.9 5.7 4.7 M6.5 2.5 C7.9 2.5 9.6 3.4 9.7 4.8" fill="none" stroke="#3a3a3a" stroke-width="0.95" stroke-linecap="round"/><path d="M2 5.8v3 M5.1 5.8v3 M8.2 5.8v3 M0.9 7.3h8.4" stroke="#c4c4c4" stroke-width="0.65" stroke-dasharray="0.9 0.8"/></svg>
<div class="abs" style="left:155.10000000000002px;top:29px;width:18.399999999999977px;height:14.8px;background:#fdd4d9;"></div>
<div class="t" style="left:158.00000000000003px;top:31.57px;font-size:5.7px;transform:scale(0.96,1.12);transform-origin:0 2.78px;color:#333;">1</div>
<div class="t" style="left:155.10000000000002px;top:36.97px;font-size:5.7px;width:16.299999999999976px;text-align:right;transform:scale(0.96,1.12);transform-origin:100% 2.78px;color:#333;">8</div>
<div class="abs" style="left:155.10000000000002px;top:43.8px;width:18.399999999999977px;height:13.8px;background:#e2fbe9;"></div>
<div class="abs" style="left:155.10000000000002px;top:57.6px;width:18.399999999999977px;height:14.8px;background:#c2f3d2;"></div>
<div class="abs" style="left:155.10000000000002px;top:72.4px;width:18.399999999999977px;height:14.2px;background:#e2fbe9;"></div>
<div class="t" style="left:155.10000000000002px;top:47.01px;font-size:7.9px;width:18.399999999999977px;text-align:center;transform:scale(0.96,1.12);transform-origin:50% 3.86px;color:#333;">7</div>
<div class="t" style="left:155.10000000000002px;top:61.61px;font-size:7.9px;width:18.399999999999977px;text-align:center;transform:scale(0.96,1.12);transform-origin:50% 3.86px;color:#333;">9.4</div>
<div class="t" style="left:155.10000000000002px;top:75.71px;font-size:7.9px;width:18.399999999999977px;text-align:center;transform:scale(0.96,1.12);transform-origin:50% 3.86px;color:#333;">0.9</div>
<div class="abs" style="left:155.3px;top:92.55px;width:17.99999999999998px;height:2.6px;background:#f8c43c;border-radius:1.3px"></div>
<div class="abs" style="left:155.3px;top:106.95px;width:17.99999999999998px;height:2.6px;background:#f8c43c;border-radius:1.3px"></div>
<div class="abs" style="left:155.3px;top:121.4px;width:17.99999999999998px;height:2.6px;background:#f8c43c;border-radius:1.3px"></div>
<div class="abs" style="left:155.3px;top:135.4px;width:17.99999999999998px;height:2.6px;background:#f8c43c;border-radius:1.3px"></div>
<div class="t" style="left:181.7px;top:4.12px;font-size:7.3px;width:20.5px;text-align:center;transform:scale(0.96,1.12);transform-origin:50% 3.57px;color:#222;">13</div>
<svg class="abs" style="left:186.29999999999998px;top:17.6px" width="10.5" height="9" viewBox="0 0 10.5 9"><path d="M0.9 4.9 C0.9 2.6 2.2 1 3.7 1 C4.8 1 6 1.6 6.5 2.5 C5.9 3 5.7 3.9 5.7 4.7 M6.5 2.5 C7.9 2.5 9.6 3.4 9.7 4.8" fill="none" stroke="#3a3a3a" stroke-width="0.95" stroke-linecap="round"/><path d="M2 5.8v3 M5.1 5.8v3 M8.2 5.8v3 M0.9 7.3h8.4" stroke="#c4c4c4" stroke-width="0.65" stroke-dasharray="0.9 0.8"/></svg>
<div class="abs" style="left:181.7px;top:29px;width:20.5px;height:14.8px;background:#c2f3d2;"></div>
<div class="t" style="left:184.6px;top:31.57px;font-size:5.7px;transform:scale(0.96,1.12);transform-origin:0 2.78px;color:#333;">5</div>
<div class="t" style="left:181.7px;top:36.97px;font-size:5.7px;width:18.4px;text-align:right;transform:scale(0.96,1.12);transform-origin:100% 2.78px;color:#333;">10</div>
<div class="abs" style="left:181.7px;top:43.8px;width:20.5px;height:13.8px;background:#e2fbe9;"></div>
<div class="abs" style="left:181.7px;top:57.6px;width:20.5px;height:14.8px;background:#c2f3d2;"></div>
<div class="abs" style="left:181.7px;top:72.4px;width:20.5px;height:14.2px;background:#e2fbe9;"></div>
<div class="t" style="left:181.7px;top:47.01px;font-size:7.9px;width:20.5px;text-align:center;transform:scale(0.96,1.12);transform-origin:50% 3.86px;color:#333;">9</div>
<div class="t" style="left:181.7px;top:61.61px;font-size:7.9px;width:20.5px;text-align:center;transform:scale(0.96,1.12);transform-origin:50% 3.86px;color:#333;">5.1</div>
<div class="t" style="left:181.7px;top:75.71px;font-size:7.9px;width:20.5px;text-align:center;transform:scale(0.96,1.12);transform-origin:50% 3.86px;color:#333;">0.9</div>
<div class="abs" style="left:181.89999999999998px;top:92.55px;width:20.1px;height:2.6px;background:#80eda6;border-radius:1.3px"></div>
<div class="abs" style="left:181.89999999999998px;top:106.95px;width:20.1px;height:2.6px;background:#80eda6;border-radius:1.3px"></div>
<div class="abs" style="left:181.89999999999998px;top:121.4px;width:20.1px;height:2.6px;background:#80eda6;border-radius:1.3px"></div>
<div class="abs" style="left:181.89999999999998px;top:135.4px;width:20.1px;height:2.6px;background:#80eda6;border-radius:1.3px"></div>
<div class="abs" style="left:210.5px;top:1px;width:18.5px;height:13.6px;background:#f0f1f4;"></div>
<div class="t" style="left:210.5px;top:4.12px;font-size:7.3px;width:18.5px;text-align:center;transform:scale(0.96,1.12);transform-origin:50% 3.57px;color:#222;font-weight:bold;">14</div>
<svg class="abs" style="left:215.1px;top:17.6px" width="10.5" height="9" viewBox="0 0 10.5 9"><path d="M0.9 4.9 C0.9 2.6 2.2 1 3.7 1 C4.8 1 6 1.6 6.5 2.5 C5.9 3 5.7 3.9 5.7 4.7 M6.5 2.5 C7.9 2.5 9.6 3.4 9.7 4.8" fill="none" stroke="#3a3a3a" stroke-width="0.95" stroke-linecap="round"/><path d="M2 5.8v3 M5.1 5.8v3 M8.2 5.8v3 M0.9 7.3h8.4" stroke="#c4c4c4" stroke-width="0.65" stroke-dasharray="0.9 0.8"/></svg>
<div class="abs" style="left:210.5px;top:29px;width:18.5px;height:14.8px;background:#fdd4d9;"></div>
<div class="t" style="left:213.4px;top:31.57px;font-size:5.7px;transform:scale(0.96,1.12);transform-origin:0 2.78px;color:#333;font-weight:bold;">2</div>
<div class="t" style="left:210.5px;top:36.97px;font-size:5.7px;width:16.4px;text-align:right;transform:scale(0.96,1.12);transform-origin:100% 2.78px;color:#333;font-weight:bold;">5</div>
<div class="abs" style="left:210.5px;top:43.8px;width:18.5px;height:13.8px;background:#e2fbe9;"></div>
<div class="abs" style="left:210.5px;top:57.6px;width:18.5px;height:14.8px;background:#c2f3d2;"></div>
<div class="abs" style="left:210.5px;top:72.4px;width:18.5px;height:14.2px;background:#e2fbe9;"></div>
<div class="t" style="left:210.5px;top:47.01px;font-size:7.9px;width:18.5px;text-align:center;transform:scale(0.96,1.12);transform-origin:50% 3.86px;color:#333;font-weight:bold;">8</div>
<div class="t" style="left:210.5px;top:61.61px;font-size:7.9px;width:18.5px;text-align:center;transform:scale(0.96,1.12);transform-origin:50% 3.86px;color:#333;font-weight:bold;">3.2</div>
<div class="t" style="left:210.5px;top:75.71px;font-size:7.9px;width:18.5px;text-align:center;transform:scale(0.96,1.12);transform-origin:50% 3.86px;color:#333;font-weight:bold;">0.2</div>
<div class="abs" style="left:210.7px;top:92.55px;width:18.1px;height:2.6px;background:#f8c43c;border-radius:1.3px"></div>
<div class="abs" style="left:210.7px;top:106.95px;width:18.1px;height:2.6px;background:#f8c43c;border-radius:1.3px"></div>
<div class="abs" style="left:210.7px;top:121.4px;width:18.1px;height:2.6px;background:#f8c43c;border-radius:1.3px"></div>
<div class="abs" style="left:210.7px;top:135.4px;width:18.1px;height:2.6px;background:#f8c43c;border-radius:1.3px"></div>
<div class="t" style="left:237.10000000000002px;top:4.12px;font-size:7.3px;width:18.599999999999966px;text-align:center;transform:scale(0.96,1.12);transform-origin:50% 3.57px;color:#222;">15</div>
<svg class="abs" style="left:241.70000000000002px;top:17.6px" width="10.5" height="9" viewBox="0 0 10.5 9"><path d="M0.9 4.9 C0.9 2.6 2.2 1 3.7 1 C4.8 1 6 1.6 6.5 2.5 C5.9 3 5.7 3.9 5.7 4.7 M6.5 2.5 C7.9 2.5 9.6 3.4 9.7 4.8" fill="none" stroke="#3a3a3a" stroke-width="0.95" stroke-linecap="round"/><path d="M2 5.8v3 M5.1 5.8v3 M8.2 5.8v3 M0.9 7.3h8.4" stroke="#c4c4c4" stroke-width="0.65" stroke-dasharray="0.9 0.8"/></svg>
<div class="abs" style="left:237.10000000000002px;top:29px;width:18.599999999999966px;height:14.8px;background:#fdd4d9;"></div>
<div class="t" style="left:240.00000000000003px;top:31.57px;font-size:5.7px;transform:scale(0.96,1.12);transform-origin:0 2.78px;color:#333;">1</div>
<div class="t" style="left:237.10000000000002px;top:36.97px;font-size:5.7px;width:16.499999999999964px;text-align:right;transform:scale(0.96,1.12);transform-origin:100% 2.78px;color:#333;">6</div>
<div class="abs" style="left:237.10000000000002px;top:43.8px;width:18.599999999999966px;height:13.8px;background:#e2fbe9;"></div>
<div class="abs" style="left:237.10000000000002px;top:57.6px;width:18.599999999999966px;height:14.8px;background:#c2f3d2;"></div>
<div class="abs" style="left:237.10000000000002px;top:72.4px;width:18.599999999999966px;height:14.2px;background:#e2fbe9;"></div>
<div class="t" style="left:237.10000000000002px;top:47.01px;font-size:7.9px;width:18.599999999999966px;text-align:center;transform:scale(0.96,1.12);transform-origin:50% 3.86px;color:#333;">4</div>
<div class="t" style="left:237.10000000000002px;top:61.61px;font-size:7.9px;width:18.599999999999966px;text-align:center;transform:scale(0.96,1.12);transform-origin:50% 3.86px;color:#333;">10</div>
<div class="t" style="left:237.10000000000002px;top:75.71px;font-size:7.9px;width:18.599999999999966px;text-align:center;transform:scale(0.96,1.12);transform-origin:50% 3.86px;color:#333;">0.5</div>
<div class="abs" style="left:237.3px;top:92.55px;width:18.199999999999967px;height:2.6px;background:#f8c43c;border-radius:1.3px"></div>
<div class="abs" style="left:237.3px;top:106.95px;width:18.199999999999967px;height:2.6px;background:#f8c43c;border-radius:1.3px"></div>
<div class="abs" style="left:237.3px;top:121.4px;width:18.199999999999967px;height:2.6px;background:#f8c43c;border-radius:1.3px"></div>
<div class="abs" style="left:237.3px;top:135.4px;width:18.199999999999967px;height:2.6px;background:#f8c43c;border-radius:1.3px"></div>
<div class="t" style="left:264.1px;top:4.12px;font-size:7.3px;width:18.699999999999932px;text-align:center;transform:scale(0.96,1.12);transform-origin:50% 3.57px;color:#222;">16</div>
<svg class="abs" style="left:268.70000000000005px;top:17.6px" width="10.5" height="9" viewBox="0 0 10.5 9"><path d="M0.9 4.9 C0.9 2.6 2.2 1 3.7 1 C4.8 1 6 1.6 6.5 2.5 C5.9 3 5.7 3.9 5.7 4.7 M6.5 2.5 C7.9 2.5 9.6 3.4 9.7 4.8" fill="none" stroke="#3a3a3a" stroke-width="0.95" stroke-linecap="round"/><path d="M2 5.8v3 M5.1 5.8v3 M8.2 5.8v3 M0.9 7.3h8.4" stroke="#c4c4c4" stroke-width="0.65" stroke-dasharray="0.9 0.8"/></svg>
<div class="abs" style="left:264.1px;top:29px;width:18.699999999999932px;height:14.8px;background:#c2f3d2;"></div>
<div class="t" style="left:267.0px;top:31.57px;font-size:5.7px;transform:scale(0.96,1.12);transform-origin:0 2.78px;color:#333;">4</div>
<div class="t" style="left:264.1px;top:36.97px;font-size:5.7px;width:16.59999999999993px;text-align:right;transform:scale(0.96,1.12);transform-origin:100% 2.78px;color:#333;">8</div>
<div class="abs" style="left:264.1px;top:43.8px;width:18.699999999999932px;height:13.8px;background:#e2fbe9;"></div>
<div class="abs" style="left:264.1px;top:57.6px;width:18.699999999999932px;height:14.8px;background:#c2f3d2;"></div>
<div class="abs" style="left:264.1px;top:72.4px;width:18.699999999999932px;height:14.2px;background:#e2fbe9;"></div>
<div class="t" style="left:264.1px;top:47.01px;font-size:7.9px;width:18.699999999999932px;text-align:center;transform:scale(0.96,1.12);transform-origin:50% 3.86px;color:#333;">6</div>
<div class="t" style="left:264.1px;top:61.61px;font-size:7.9px;width:18.699999999999932px;text-align:center;transform:scale(0.96,1.12);transform-origin:50% 3.86px;color:#333;">4.7</div>
<div class="t" style="left:264.1px;top:75.71px;font-size:7.9px;width:18.699999999999932px;text-align:center;transform:scale(0.96,1.12);transform-origin:50% 3.86px;color:#333;">0.6</div>
<div class="abs" style="left:264.3px;top:92.55px;width:18.299999999999933px;height:2.6px;background:#f8c43c;border-radius:1.3px"></div>
<div class="abs" style="left:264.3px;top:106.95px;width:18.299999999999933px;height:2.6px;background:#80eda6;border-radius:1.3px"></div>
<div class="abs" style="left:264.3px;top:121.4px;width:18.299999999999933px;height:2.6px;background:#80eda6;border-radius:1.3px"></div>
<div class="abs" style="left:264.3px;top:135.4px;width:18.299999999999933px;height:2.6px;background:#80eda6;border-radius:1.3px"></div>
<div class="t" style="left:291.1px;top:4.12px;font-size:7.3px;width:18.299999999999955px;text-align:center;transform:scale(0.96,1.12);transform-origin:50% 3.57px;color:#222;">17</div>
<svg class="abs" style="left:295.70000000000005px;top:17.6px" width="10.5" height="9" viewBox="0 0 10.5 9"><path d="M0.9 4.9 C0.9 2.6 2.2 1 3.7 1 C4.8 1 6 1.6 6.5 2.5 C5.9 3 5.7 3.9 5.7 4.7 M6.5 2.5 C7.9 2.5 9.6 3.4 9.7 4.8" fill="none" stroke="#3a3a3a" stroke-width="0.95" stroke-linecap="round"/><path d="M2 5.8v3 M5.1 5.8v3 M8.2 5.8v3 M0.9 7.3h8.4" stroke="#c4c4c4" stroke-width="0.65" stroke-dasharray="0.9 0.8"/></svg>
<div class="abs" style="left:291.1px;top:29px;width:18.299999999999955px;height:14.8px;background:#c2f3d2;"></div>
<div class="t" style="left:294.0px;top:31.57px;font-size:5.7px;transform:scale(0.96,1.12);transform-origin:0 2.78px;color:#333;">5</div>
<div class="t" style="left:291.1px;top:36.97px;font-size:5.7px;width:16.199999999999953px;text-align:right;transform:scale(0.96,1.12);transform-origin:100% 2.78px;color:#333;">9</div>
<div class="abs" style="left:291.1px;top:43.8px;width:18.299999999999955px;height:13.8px;background:#e2fbe9;"></div>
<div class="abs" style="left:291.1px;top:57.6px;width:18.299999999999955px;height:14.8px;background:#c2f3d2;"></div>
<div class="abs" style="left:291.1px;top:72.4px;width:18.299999999999955px;height:14.2px;background:#e2fbe9;"></div>
<div class="t" style="left:291.1px;top:47.01px;font-size:7.9px;width:18.299999999999955px;text-align:center;transform:scale(0.96,1.12);transform-origin:50% 3.86px;color:#333;">5</div>
<div class="t" style="left:291.1px;top:61.61px;font-size:7.9px;width:18.299999999999955px;text-align:center;transform:scale(0.96,1.12);transform-origin:50% 3.86px;color:#333;">4.7</div>
<div class="t" style="left:291.1px;top:75.71px;font-size:7.9px;width:18.299999999999955px;text-align:center;transform:scale(0.96,1.12);transform-origin:50% 3.86px;color:#333;">0.3</div>
<div class="abs" style="left:291.3px;top:92.55px;width:17.899999999999956px;height:2.6px;background:#80eda6;border-radius:1.3px"></div>
<div class="abs" style="left:291.3px;top:106.95px;width:17.899999999999956px;height:2.6px;background:#80eda6;border-radius:1.3px"></div>
<div class="abs" style="left:291.3px;top:121.4px;width:17.899999999999956px;height:2.6px;background:#80eda6;border-radius:1.3px"></div>
<div class="abs" style="left:291.3px;top:135.4px;width:17.899999999999956px;height:2.6px;background:#80eda6;border-radius:1.3px"></div>
<div class="t" style="left:317.9px;top:4.12px;font-size:7.3px;width:18.300000000000068px;text-align:center;transform:scale(0.96,1.12);transform-origin:50% 3.57px;color:#222;">18</div>
<svg class="abs" style="left:322.5px;top:17.6px" width="10.5" height="9" viewBox="0 0 10.5 9"><path d="M0.9 4.9 C0.9 2.6 2.2 1 3.7 1 C4.8 1 6 1.6 6.5 2.5 C5.9 3 5.7 3.9 5.7 4.7 M6.5 2.5 C7.9 2.5 9.6 3.4 9.7 4.8" fill="none" stroke="#3a3a3a" stroke-width="0.95" stroke-linecap="round"/><path d="M2 5.8v3 M5.1 5.8v3 M8.2 5.8v3 M0.9 7.3h8.4" stroke="#c4c4c4" stroke-width="0.65" stroke-dasharray="0.9 0.8"/></svg>
<div class="abs" style="left:317.9px;top:29px;width:18.300000000000068px;height:14.8px;background:#c2f3d2;"></div>
<div class="t" style="left:320.79999999999995px;top:31.57px;font-size:5.7px;transform:scale(0.96,1.12);transform-origin:0 2.78px;color:#333;">4</div>
<div class="t" style="left:317.9px;top:36.97px;font-size:5.7px;width:16.200000000000067px;text-align:right;transform:scale(0.96,1.12);transform-origin:100% 2.78px;color:#333;">7</div>
<div class="abs" style="left:317.9px;top:43.8px;width:18.300000000000068px;height:13.8px;background:#e2fbe9;"></div>
<div class="abs" style="left:317.9px;top:57.6px;width:18.300000000000068px;height:14.8px;background:#c2f3d2;"></div>
<div class="abs" style="left:317.9px;top:72.4px;width:18.300000000000068px;height:14.2px;background:#e2fbe9;"></div>
<div class="t" style="left:317.9px;top:47.01px;font-size:7.9px;width:18.300000000000068px;text-align:center;transform:scale(0.96,1.12);transform-origin:50% 3.86px;color:#333;">5</div>
<div class="t" style="left:317.9px;top:61.61px;font-size:7.9px;width:18.300000000000068px;text-align:center;transform:scale(0.96,1.12);transform-origin:50% 3.86px;color:#333;">3.3</div>
<div class="t" style="left:317.9px;top:75.71px;font-size:7.9px;width:18.300000000000068px;text-align:center;transform:scale(0.96,1.12);transform-origin:50% 3.86px;color:#333;">0.2</div>
<div class="abs" style="left:318.09999999999997px;top:92.55px;width:17.90000000000007px;height:2.6px;background:#f8c43c;border-radius:1.3px"></div>
<div class="abs" style="left:318.09999999999997px;top:106.95px;width:17.90000000000007px;height:2.6px;background:#80eda6;border-radius:1.3px"></div>
<div class="abs" style="left:318.09999999999997px;top:121.4px;width:17.90000000000007px;height:2.6px;background:#80eda6;border-radius:1.3px"></div>
<div class="abs" style="left:318.09999999999997px;top:135.4px;width:17.90000000000007px;height:2.6px;background:#80eda6;border-radius:1.3px"></div>
<div class="t" style="left:344.70000000000005px;top:4.12px;font-size:7.3px;width:18.299999999999955px;text-align:center;transform:scale(0.96,1.12);transform-origin:50% 3.57px;color:#222;">19</div>
<svg class="abs" style="left:349.30000000000007px;top:17.6px" width="10.5" height="9" viewBox="0 0 10.5 9"><path d="M0.9 4.9 C0.9 2.6 2.2 1 3.7 1 C4.8 1 6 1.6 6.5 2.5 C5.9 3 5.7 3.9 5.7 4.7 M6.5 2.5 C7.9 2.5 9.6 3.4 9.7 4.8" fill="none" stroke="#3a3a3a" stroke-width="0.95" stroke-linecap="round"/><path d="M2 5.8v3 M5.1 5.8v3 M8.2 5.8v3 M0.9 7.3h8.4" stroke="#c4c4c4" stroke-width="0.65" stroke-dasharray="0.9 0.8"/></svg>
<div class="abs" style="left:344.70000000000005px;top:29px;width:18.299999999999955px;height:14.8px;background:#c2f3d2;"></div>
<div class="t" style="left:347.6px;top:31.57px;font-size:5.7px;transform:scale(0.96,1.12);transform-origin:0 2.78px;color:#333;">3</div>
<div class="t" style="left:344.70000000000005px;top:36.97px;font-size:5.7px;width:16.199999999999953px;text-align:right;transform:scale(0.96,1.12);transform-origin:100% 2.78px;color:#333;">7</div>
<div class="abs" style="left:344.70000000000005px;top:43.8px;width:18.299999999999955px;height:13.8px;background:#e2fbe9;"></div>
<div class="abs" style="left:344.70000000000005px;top:57.6px;width:18.299999999999955px;height:14.8px;background:#c2f3d2;"></div>
<div class="abs" style="left:344.70000000000005px;top:72.4px;width:18.299999999999955px;height:14.2px;background:#e2fbe9;"></div>
<div class="t" style="left:344.70000000000005px;top:47.01px;font-size:7.9px;width:18.299999999999955px;text-align:center;transform:scale(0.96,1.12);transform-origin:50% 3.86px;color:#333;">4</div>
<div class="t" style="left:344.70000000000005px;top:61.61px;font-size:7.9px;width:18.299999999999955px;text-align:center;transform:scale(0.96,1.12);transform-origin:50% 3.86px;color:#333;">1.5</div>
<div class="t" style="left:344.70000000000005px;top:75.71px;font-size:7.9px;width:18.299999999999955px;text-align:center;transform:scale(0.96,1.12);transform-origin:50% 3.86px;color:#333;">0.2</div>
<div class="abs" style="left:344.90000000000003px;top:92.55px;width:17.899999999999956px;height:2.6px;background:#f8c43c;border-radius:1.3px"></div>
<div class="abs" style="left:344.90000000000003px;top:106.95px;width:17.899999999999956px;height:2.6px;background:#80eda6;border-radius:1.3px"></div>
<div class="abs" style="left:344.90000000000003px;top:121.4px;width:17.899999999999956px;height:2.6px;background:#80eda6;border-radius:1.3px"></div>
<div class="abs" style="left:344.90000000000003px;top:135.4px;width:17.899999999999956px;height:2.6px;background:#80eda6;border-radius:1.3px"></div>
<div class="t" style="left:371.1px;top:4.12px;font-size:7.3px;width:18.799999999999955px;text-align:center;transform:scale(0.96,1.12);transform-origin:50% 3.57px;color:#222;">20</div>
<svg class="abs" style="left:375.70000000000005px;top:17.6px" width="10.5" height="9" viewBox="0 0 10.5 9"><path d="M0.9 4.9 C0.9 2.6 2.2 1 3.7 1 C4.8 1 6 1.6 6.5 2.5 C5.9 3 5.7 3.9 5.7 4.7 M6.5 2.5 C7.9 2.5 9.6 3.4 9.7 4.8" fill="none" stroke="#3a3a3a" stroke-width="0.95" stroke-linecap="round"/><path d="M2 5.8v3 M5.1 5.8v3 M8.2 5.8v3 M0.9 7.3h8.4" stroke="#c4c4c4" stroke-width="0.65" stroke-dasharray="0.9 0.8"/></svg>
<div class="abs" style="left:371.1px;top:29px;width:18.799999999999955px;height:14.8px;background:#c2f3d2;"></div>
<div class="t" style="left:374.0px;top:31.57px;font-size:5.7px;transform:scale(0.96,1.12);transform-origin:0 2.78px;color:#333;">3</div>
<div class="t" style="left:371.1px;top:36.97px;font-size:5.7px;width:16.699999999999953px;text-align:right;transform:scale(0.96,1.12);transform-origin:100% 2.78px;color:#333;">7</div>
<div class="abs" style="left:371.1px;top:43.8px;width:18.799999999999955px;height:13.8px;background:#e2fbe9;"></div>
<div class="abs" style="left:371.1px;top:57.6px;width:18.799999999999955px;height:14.8px;background:#c2f3d2;"></div>
<div class="abs" style="left:371.1px;top:72.4px;width:18.799999999999955px;height:14.2px;background:#e2fbe9;"></div>
<div class="t" style="left:371.1px;top:47.01px;font-size:7.9px;width:18.799999999999955px;text-align:center;transform:scale(0.96,1.12);transform-origin:50% 3.86px;color:#333;">4</div>
<div class="t" style="left:371.1px;top:61.61px;font-size:7.9px;width:18.799999999999955px;text-align:center;transform:scale(0.96,1.12);transform-origin:50% 3.86px;color:#333;">0.3</div>
<div class="t" style="left:371.1px;top:75.71px;font-size:7.9px;width:18.799999999999955px;text-align:center;transform:scale(0.96,1.12);transform-origin:50% 3.86px;color:#333;">0.1</div>
<div class="abs" style="left:371.3px;top:92.55px;width:18.399999999999956px;height:2.6px;background:#f8c43c;border-radius:1.3px"></div>
<div class="abs" style="left:371.3px;top:106.95px;width:18.399999999999956px;height:2.6px;background:#80eda6;border-radius:1.3px"></div>
<div class="abs" style="left:371.3px;top:121.4px;width:18.399999999999956px;height:2.6px;background:#80eda6;border-radius:1.3px"></div>
<div class="abs" style="left:371.3px;top:135.4px;width:18.399999999999956px;height:2.6px;background:#80eda6;border-radius:1.3px"></div>
<div class="t" style="left:397.9px;top:4.12px;font-size:7.3px;width:18.800000000000068px;text-align:center;transform:scale(0.96,1.12);transform-origin:50% 3.57px;color:#222;">21</div>
<svg class="abs" style="left:402.5px;top:17.6px" width="10.5" height="9" viewBox="0 0 10.5 9"><path d="M0.9 4.9 C0.9 2.6 2.2 1 3.7 1 C4.8 1 6 1.6 6.5 2.5 C5.9 3 5.7 3.9 5.7 4.7 M6.5 2.5 C7.9 2.5 9.6 3.4 9.7 4.8" fill="none" stroke="#3a3a3a" stroke-width="0.95" stroke-linecap="round"/><path d="M2 5.8v3 M5.1 5.8v3 M8.2 5.8v3 M0.9 7.3h8.4" stroke="#c4c4c4" stroke-width="0.65" stroke-dasharray="0.9 0.8"/></svg>
<div class="abs" style="left:397.9px;top:29px;width:18.800000000000068px;height:14.8px;background:#c2f3d2;"></div>
<div class="t" style="left:400.79999999999995px;top:31.57px;font-size:5.7px;transform:scale(0.96,1.12);transform-origin:0 2.78px;color:#333;">3</div>
<div class="t" style="left:397.9px;top:36.97px;font-size:5.7px;width:16.700000000000067px;text-align:right;transform:scale(0.96,1.12);transform-origin:100% 2.78px;color:#333;">8</div>
<div class="abs" style="left:397.9px;top:43.8px;width:18.800000000000068px;height:13.8px;background:#e2fbe9;"></div>
<div class="abs" style="left:397.9px;top:57.6px;width:18.800000000000068px;height:14.8px;background:#c2f3d2;"></div>
<div class="abs" style="left:397.9px;top:72.4px;width:18.800000000000068px;height:14.2px;background:#e2fbe9;"></div>
<div class="t" style="left:397.9px;top:47.01px;font-size:7.9px;width:18.800000000000068px;text-align:center;transform:scale(0.96,1.12);transform-origin:50% 3.86px;color:#333;">4</div>
<div class="t" style="left:397.9px;top:61.61px;font-size:7.9px;width:18.800000000000068px;text-align:center;transform:scale(0.96,1.12);transform-origin:50% 3.86px;color:#333;">1.5</div>
<div class="t" style="left:397.9px;top:75.71px;font-size:7.9px;width:18.800000000000068px;text-align:center;transform:scale(0.96,1.12);transform-origin:50% 3.86px;color:#333;">0.2</div>
<div class="abs" style="left:398.09999999999997px;top:92.55px;width:18.40000000000007px;height:2.6px;background:#f8c43c;border-radius:1.3px"></div>
<div class="abs" style="left:398.09999999999997px;top:106.95px;width:18.40000000000007px;height:2.6px;background:#80eda6;border-radius:1.3px"></div>
<div class="abs" style="left:398.09999999999997px;top:121.4px;width:18.40000000000007px;height:2.6px;background:#80eda6;border-radius:1.3px"></div>
<div class="abs" style="left:398.09999999999997px;top:135.4px;width:18.40000000000007px;height:2.6px;background:#80eda6;border-radius:1.3px"></div>
<div class="t" style="left:425px;top:4.12px;font-size:7.3px;width:18.600000000000023px;text-align:center;transform:scale(0.96,1.12);transform-origin:50% 3.57px;color:#222;">22</div>
<svg class="abs" style="left:429.6px;top:17.6px" width="10.5" height="9" viewBox="0 0 10.5 9"><path d="M0.9 5.2 C0.9 2.8 2.3 1.2 3.9 1.2 C5.2 1.2 6.3 1.8 6.8 2.8 C8.2 2.8 9.4 3.8 9.5 5.4 M3.2 5.5 L4.6 3 L6 5.5 M6.4 4.2 L8.6 6.2" fill="none" stroke="#444" stroke-width="1" stroke-linecap="round"/></svg>
<div class="abs" style="left:425px;top:29px;width:18.600000000000023px;height:14.8px;background:#c2f3d2;"></div>
<div class="t" style="left:427.9px;top:31.57px;font-size:5.7px;transform:scale(0.96,1.12);transform-origin:0 2.78px;color:#333;">4</div>
<div class="t" style="left:425px;top:36.97px;font-size:5.7px;width:16.50000000000002px;text-align:right;transform:scale(0.96,1.12);transform-origin:100% 2.78px;color:#333;">8</div>
<div class="abs" style="left:425px;top:43.8px;width:18.600000000000023px;height:13.8px;background:#e2fbe9;"></div>
<div class="abs" style="left:425px;top:57.6px;width:18.600000000000023px;height:14.8px;background:#c2f3d2;"></div>
<div class="abs" style="left:425px;top:72.4px;width:18.600000000000023px;height:14.2px;background:#e2fbe9;"></div>
<div class="t" style="left:425px;top:47.01px;font-size:7.9px;width:18.600000000000023px;text-align:center;transform:scale(0.96,1.12);transform-origin:50% 3.86px;color:#333;">4</div>
<div class="t" style="left:425px;top:61.61px;font-size:7.9px;width:18.600000000000023px;text-align:center;transform:scale(0.96,1.12);transform-origin:50% 3.86px;color:#333;">0.9</div>
<div class="t" style="left:425px;top:75.71px;font-size:7.9px;width:18.600000000000023px;text-align:center;transform:scale(0.96,1.12);transform-origin:50% 3.86px;color:#333;">0.1</div>
<div class="abs" style="left:425.2px;top:92.55px;width:18.200000000000024px;height:2.6px;background:#f8c43c;border-radius:1.3px"></div>
<div class="abs" style="left:425.2px;top:106.95px;width:18.200000000000024px;height:2.6px;background:#80eda6;border-radius:1.3px"></div>
<div class="abs" style="left:425.2px;top:121.4px;width:18.200000000000024px;height:2.6px;background:#80eda6;border-radius:1.3px"></div>
<div class="abs" style="left:425.2px;top:135.4px;width:18.200000000000024px;height:2.6px;background:#80eda6;border-radius:1.3px"></div>
<div class="t" style="left:452px;top:4.12px;font-size:7.3px;width:18.5px;text-align:center;transform:scale(0.96,1.12);transform-origin:50% 3.57px;color:#222;">23</div>
<svg class="abs" style="left:456.6px;top:17.6px" width="10.5" height="9" viewBox="0 0 10.5 9"><path d="M0.9 4.9 C0.9 2.6 2.2 1 3.7 1 C4.8 1 6 1.6 6.5 2.5 C5.9 3 5.7 3.9 5.7 4.7 M6.5 2.5 C7.9 2.5 9.6 3.4 9.7 4.8" fill="none" stroke="#3a3a3a" stroke-width="0.95" stroke-linecap="round"/><path d="M2 5.8v3 M5.1 5.8v3 M8.2 5.8v3 M0.9 7.3h8.4" stroke="#c4c4c4" stroke-width="0.65" stroke-dasharray="0.9 0.8"/></svg>
<div class="abs" style="left:452px;top:29px;width:18.5px;height:14.8px;background:#c2f3d2;"></div>
<div class="t" style="left:454.9px;top:31.57px;font-size:5.7px;transform:scale(0.96,1.12);transform-origin:0 2.78px;color:#333;">3</div>
<div class="t" style="left:452px;top:36.97px;font-size:5.7px;width:16.4px;text-align:right;transform:scale(0.96,1.12);transform-origin:100% 2.78px;color:#333;">8</div>
<div class="abs" style="left:452px;top:43.8px;width:18.5px;height:13.8px;background:#e2fbe9;"></div>
<div class="abs" style="left:452px;top:57.6px;width:18.5px;height:14.8px;background:#c2f3d2;"></div>
<div class="abs" style="left:452px;top:72.4px;width:18.5px;height:14.2px;background:#e2fbe9;"></div>
<div class="t" style="left:452px;top:47.01px;font-size:7.9px;width:18.5px;text-align:center;transform:scale(0.96,1.12);transform-origin:50% 3.86px;color:#333;">4</div>
<div class="t" style="left:452px;top:61.61px;font-size:7.9px;width:18.5px;text-align:center;transform:scale(0.96,1.12);transform-origin:50% 3.86px;color:#333;">1.2</div>
<div class="t" style="left:452px;top:75.71px;font-size:7.9px;width:18.5px;text-align:center;transform:scale(0.96,1.12);transform-origin:50% 3.86px;color:#333;">0.1</div>
<div class="abs" style="left:452.2px;top:92.55px;width:18.1px;height:2.6px;background:#f8c43c;border-radius:1.3px"></div>
<div class="abs" style="left:452.2px;top:106.95px;width:18.1px;height:2.6px;background:#80eda6;border-radius:1.3px"></div>
<div class="abs" style="left:452.2px;top:121.4px;width:18.1px;height:2.6px;background:#80eda6;border-radius:1.3px"></div>
<div class="abs" style="left:452.2px;top:135.4px;width:18.1px;height:2.6px;background:#80eda6;border-radius:1.3px"></div>
<div class="t" style="left:478.6px;top:4.12px;font-size:7.3px;width:18.399999999999977px;text-align:center;transform:scale(0.96,1.12);transform-origin:50% 3.57px;color:#222;">24</div>
<svg class="abs" style="left:483.20000000000005px;top:17.6px" width="10.5" height="9" viewBox="0 0 10.5 9"><path d="M0.9 4.9 C0.9 2.6 2.2 1 3.7 1 C4.8 1 6 1.6 6.5 2.5 C5.9 3 5.7 3.9 5.7 4.7 M6.5 2.5 C7.9 2.5 9.6 3.4 9.7 4.8" fill="none" stroke="#3a3a3a" stroke-width="0.95" stroke-linecap="round"/><path d="M2 5.8v3 M5.1 5.8v3 M8.2 5.8v3 M0.9 7.3h8.4" stroke="#c4c4c4" stroke-width="0.65" stroke-dasharray="0.9 0.8"/></svg>
<div class="abs" style="left:478.6px;top:29px;width:18.399999999999977px;height:14.8px;background:#c2f3d2;"></div>
<div class="t" style="left:481.5px;top:31.57px;font-size:5.7px;transform:scale(0.96,1.12);transform-origin:0 2.78px;color:#333;">4</div>
<div class="t" style="left:478.6px;top:36.97px;font-size:5.7px;width:16.299999999999976px;text-align:right;transform:scale(0.96,1.12);transform-origin:100% 2.78px;color:#333;">8</div>
<div class="abs" style="left:478.6px;top:43.8px;width:18.399999999999977px;height:13.8px;background:#e2fbe9;"></div>
<div class="abs" style="left:478.6px;top:57.6px;width:18.399999999999977px;height:14.8px;background:#c2f3d2;"></div>
<div class="abs" style="left:478.6px;top:72.4px;width:18.399999999999977px;height:14.2px;background:#e2fbe9;"></div>
<div class="t" style="left:478.6px;top:47.01px;font-size:7.9px;width:18.399999999999977px;text-align:center;transform:scale(0.96,1.12);transform-origin:50% 3.86px;color:#333;">5</div>
<div class="t" style="left:478.6px;top:61.61px;font-size:7.9px;width:18.399999999999977px;text-align:center;transform:scale(0.96,1.12);transform-origin:50% 3.86px;color:#333;">1.0</div>
<div class="t" style="left:478.6px;top:75.71px;font-size:7.9px;width:18.399999999999977px;text-align:center;transform:scale(0.96,1.12);transform-origin:50% 3.86px;color:#333;">0.1</div>
<div class="abs" style="left:478.8px;top:92.55px;width:17.99999999999998px;height:2.6px;background:#f8c43c;border-radius:1.3px"></div>
<div class="abs" style="left:478.8px;top:106.95px;width:17.99999999999998px;height:2.6px;background:#80eda6;border-radius:1.3px"></div>
<div class="abs" style="left:478.8px;top:121.4px;width:17.99999999999998px;height:2.6px;background:#80eda6;border-radius:1.3px"></div>
<div class="abs" style="left:478.8px;top:135.4px;width:17.99999999999998px;height:2.6px;background:#80eda6;border-radius:1.3px"></div>
</div>
<div class="abs" style="left:236px;top:410.3px;width:519px;height:2.2px;background:#1ee89c;"></div>
</body></html>
